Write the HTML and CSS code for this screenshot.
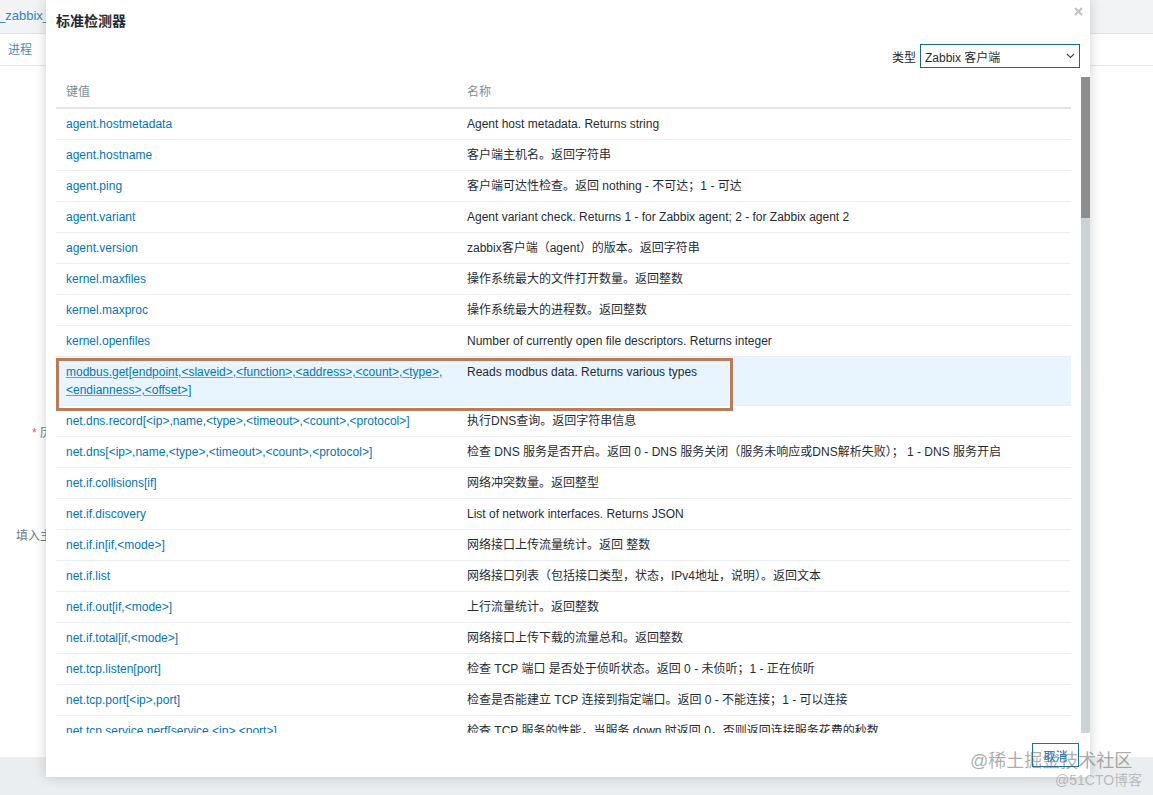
FILE: index.html
```html
<!DOCTYPE html>
<html lang="zh-CN">
<head>
    <meta charset="UTF-8">
    <meta name="viewport" content="width=device-width, initial-scale=1.0">
    <title>标准检测器</title>
    <link rel="stylesheet" href="styles.css">
</head>
<body>
<div class="page">
    <!-- Page behind the dialog -->
    <div class="main">
        <div class="topbar"><span class="crumb">_zabbix_agent</span></div>
        <div class="tabs"><a href="#">进程</a></div>
        <div class="form">
            <div class="form-row"><span class="req">*</span> 历史数据保留时长</div>
            <div class="form-row">填入主机资产纪录字段</div>
        </div>
    </div>

    <!-- Item key helper dialog -->
    <div class="dialog">
        <div class="dialog-head">标准检测器</div>
        <button class="close" type="button" title="关闭">
            <svg width="9" height="9" viewBox="0 0 9 9"><path d="M1 1 8 8M8 1 1 8" stroke="#b9c2c7" stroke-width="2"/></svg>
        </button>

        <div class="filter">
            <span>类型</span>
            <div class="select">
                <span>Zabbix 客户端</span>
                <svg width="9" height="6" viewBox="0 0 9 6"><path d="M1 1 4.5 4.5 8 1" fill="none" stroke="#3b4a52" stroke-width="1.2"/></svg>
            </div>
        </div>

        <div class="dialog-body">
            <div class="table-clip">
                <table class="keys">
                    <colgroup><col class="col-key"><col></colgroup>
                    <thead>
                        <tr><th>键值</th><th>名称</th></tr>
                    </thead>
                    <tbody>
                        <tr><td><a href="#">agent.hostmetadata</a></td><td>Agent host metadata. Returns string</td></tr>
                        <tr><td><a href="#">agent.hostname</a></td><td>客户端主机名。返回字符串</td></tr>
                        <tr><td><a href="#">agent.ping</a></td><td>客户端可达性检查。返回 nothing - 不可达；1 - 可达</td></tr>
                        <tr><td><a href="#">agent.variant</a></td><td>Agent variant check. Returns 1 - for Zabbix agent; 2 - for Zabbix agent 2</td></tr>
                        <tr><td><a href="#">agent.version</a></td><td>zabbix客户端（agent）的版本。返回字符串</td></tr>
                        <tr><td><a href="#">kernel.maxfiles</a></td><td>操作系统最大的文件打开数量。返回整数</td></tr>
                        <tr><td><a href="#">kernel.maxproc</a></td><td>操作系统最大的进程数。返回整数</td></tr>
                        <tr><td><a href="#">kernel.openfiles</a></td><td>Number of currently open file descriptors. Returns integer</td></tr>
                        <tr class="hover">
                            <td class="has-mark"><a href="#">modbus.get[endpoint,&lt;slaveid&gt;,&lt;function&gt;,&lt;address&gt;,&lt;count&gt;,&lt;type&gt;,<br>&lt;endianness&gt;,&lt;offset&gt;]</a><span class="mark"></span></td>
                            <td>Reads modbus data. Returns various types</td>
                        </tr>
                        <tr><td><a href="#">net.dns.record[&lt;ip&gt;,name,&lt;type&gt;,&lt;timeout&gt;,&lt;count&gt;,&lt;protocol&gt;]</a></td><td>执行DNS查询。返回字符串信息</td></tr>
                        <tr><td><a href="#">net.dns[&lt;ip&gt;,name,&lt;type&gt;,&lt;timeout&gt;,&lt;count&gt;,&lt;protocol&gt;]</a></td><td>检查 DNS 服务是否开启。返回 0 - DNS 服务关闭（服务未响应或DNS解析失败）； 1 - DNS 服务开启</td></tr>
                        <tr><td><a href="#">net.if.collisions[if]</a></td><td>网络冲突数量。返回整型</td></tr>
                        <tr><td><a href="#">net.if.discovery</a></td><td>List of network interfaces. Returns JSON</td></tr>
                        <tr><td><a href="#">net.if.in[if,&lt;mode&gt;]</a></td><td>网络接口上传流量统计。返回 整数</td></tr>
                        <tr><td><a href="#">net.if.list</a></td><td>网络接口列表（包括接口类型，状态，IPv4地址，说明）。返回文本</td></tr>
                        <tr><td><a href="#">net.if.out[if,&lt;mode&gt;]</a></td><td>上行流量统计。返回整数</td></tr>
                        <tr><td><a href="#">net.if.total[if,&lt;mode&gt;]</a></td><td>网络接口上传下载的流量总和。返回整数</td></tr>
                        <tr><td><a href="#">net.tcp.listen[port]</a></td><td>检查 TCP 端口 是否处于侦听状态。返回 0 - 未侦听；1 - 正在侦听</td></tr>
                        <tr><td><a href="#">net.tcp.port[&lt;ip&gt;,port]</a></td><td>检查是否能建立 TCP 连接到指定端口。返回 0 - 不能连接；1 - 可以连接</td></tr>
                        <tr><td><a href="#">net.tcp.service.perf[service,&lt;ip&gt;,&lt;port&gt;]</a></td><td>检查 TCP 服务的性能，当服务 down 时返回 0，否则返回连接服务花费的秒数</td></tr>
                        <tr><td><a href="#">net.tcp.service[service,&lt;ip&gt;,&lt;port&gt;]</a></td><td>检查服务是否运行并接受 TCP 连接。返回 0 - 服务关闭；1 - 服务运行</td></tr>
                    </tbody>
                </table>
            </div>
            <div class="scrollbar"><div class="thumb"></div></div>
        </div>

        <div class="dialog-foot">
            <button class="btn" type="button">取消</button>
        </div>
    </div>

    <!-- Watermarks -->
    <div class="wm wm-big">@稀土掘金技术社区</div>
    <div class="wm wm-small">@51CTO博客</div>
</div>
</body>
</html>
```

FILE: styles.css
```css
body {
    margin: 0;
    background-color: #ebeef0;
    font-family: "Liberation Sans", Arial, "Noto Sans CJK SC", sans-serif;
    font-size: 12px;
    color: #1f2c33;
}

a {
    color: #0275b8;
    text-decoration: none;
}

.page {
    position: relative;
    height: 795px;
    overflow: hidden;
}

/* Page behind the dialog */
.main {
    background-color: #ffffff;
    height: 757px;
}

.topbar {
    height: 33px;
    background-color: #f1f3f5;
    border-bottom: 1px solid #dde3e6;
    font-size: 13px;
    line-height: 31px;
    white-space: nowrap;
    color: #2f85bd;
}

.crumb {
    margin-left: -2px;
}

.tabs {
    height: 29px;
    padding: 2px 0 0 8px;
    line-height: 29px;
    border-bottom: 1px solid #e6e9eb;
}

.tabs a {
    color: #3f8fc6;
}

.form {
    padding-top: 358px;
}

.form-row {
    width: 136px;
    text-align: right;
    line-height: 18px;
    white-space: nowrap;
    color: #6f7a80;
}

.form-row + .form-row {
    margin-top: 85px;
}

.req {
    color: #e45959;
}

/* Dialog */
.dialog {
    position: absolute;
    left: 46px;
    top: 0;
    width: 1044px;
    height: 777px;
    background-color: #ffffff;
    box-shadow: 0 0 12px rgba(0, 0, 0, 0.18);
    display: flex;
    flex-direction: column;
}

.dialog-head {
    padding: 12px 10px 0;
    font-size: 14px;
    font-weight: bold;
    line-height: 18px;
}

.close {
    position: absolute;
    top: 7px;
    right: 7px;
    padding: 0;
    border: none;
    background: none;
    line-height: 0;
    cursor: pointer;
}

.filter {
    display: flex;
    justify-content: flex-end;
    align-items: center;
    gap: 4px;
    margin: 14px 10px 9px 0;
}

.select {
    width: 160px;
    height: 24px;
    box-sizing: border-box;
    border: 1px solid #16688c;
    padding: 0 4px 0 4px;
    display: flex;
    align-items: center;
    justify-content: space-between;
}

.dialog-body {
    height: 656px;
    display: flex;
    padding-left: 10px;
}

.table-clip {
    flex: 1;
    overflow: hidden;
    padding-right: 10px;
}

.keys {
    width: 100%;
    border-collapse: collapse;
    table-layout: fixed;
}

.col-key {
    width: 401px;
}

.keys th {
    text-align: left;
    font-weight: normal;
    color: #768d99;
    padding: 6px 10px 6px;
    line-height: 18px;
    border-bottom: 2px solid #dfe4e7;
}

.keys td {
    padding: 6px 10px;
    line-height: 18px;
    border-bottom: 1px solid #ebeef0;
    vertical-align: top;
    white-space: nowrap;
}

.keys tr.hover td {
    background-color: #e8f5ff;
}

.keys tr.hover a {
    text-decoration: underline;
    text-decoration-color: #5aa3d3;
}

/* Annotation box drawn over the highlighted row */
.has-mark {
    position: relative;
}

.mark {
    position: absolute;
    left: 0;
    top: 1px;
    width: 677px;
    height: 53px;
    box-sizing: border-box;
    border: 3px solid #b97b58;
}

.scrollbar {
    width: 9px;
    background-color: #ccd3d7;
}

.thumb {
    height: 141px;
    background-color: #8d8e8f;
}

.dialog-foot {
    display: flex;
    justify-content: flex-end;
    padding: 10px 11px 10px;
}

.btn {
    width: 47px;
    height: 24px;
    box-sizing: border-box;
    border: 1px solid #1a72a3;
    background-color: #ffffff;
    color: #0275b8;
    font-family: inherit;
    font-size: 12px;
    padding: 0;
    cursor: pointer;
}

/* Watermarks */
.wm {
    position: absolute;
    white-space: nowrap;
}

.wm-big {
    left: 970px;
    top: 750px;
    font-size: 18px;
    line-height: 22px;
    color: rgba(100, 100, 100, 0.55);
}

.wm-small {
    left: 1055px;
    top: 771px;
    font-size: 14px;
    line-height: 18px;
    color: rgba(150, 150, 150, 0.6);
}
```
